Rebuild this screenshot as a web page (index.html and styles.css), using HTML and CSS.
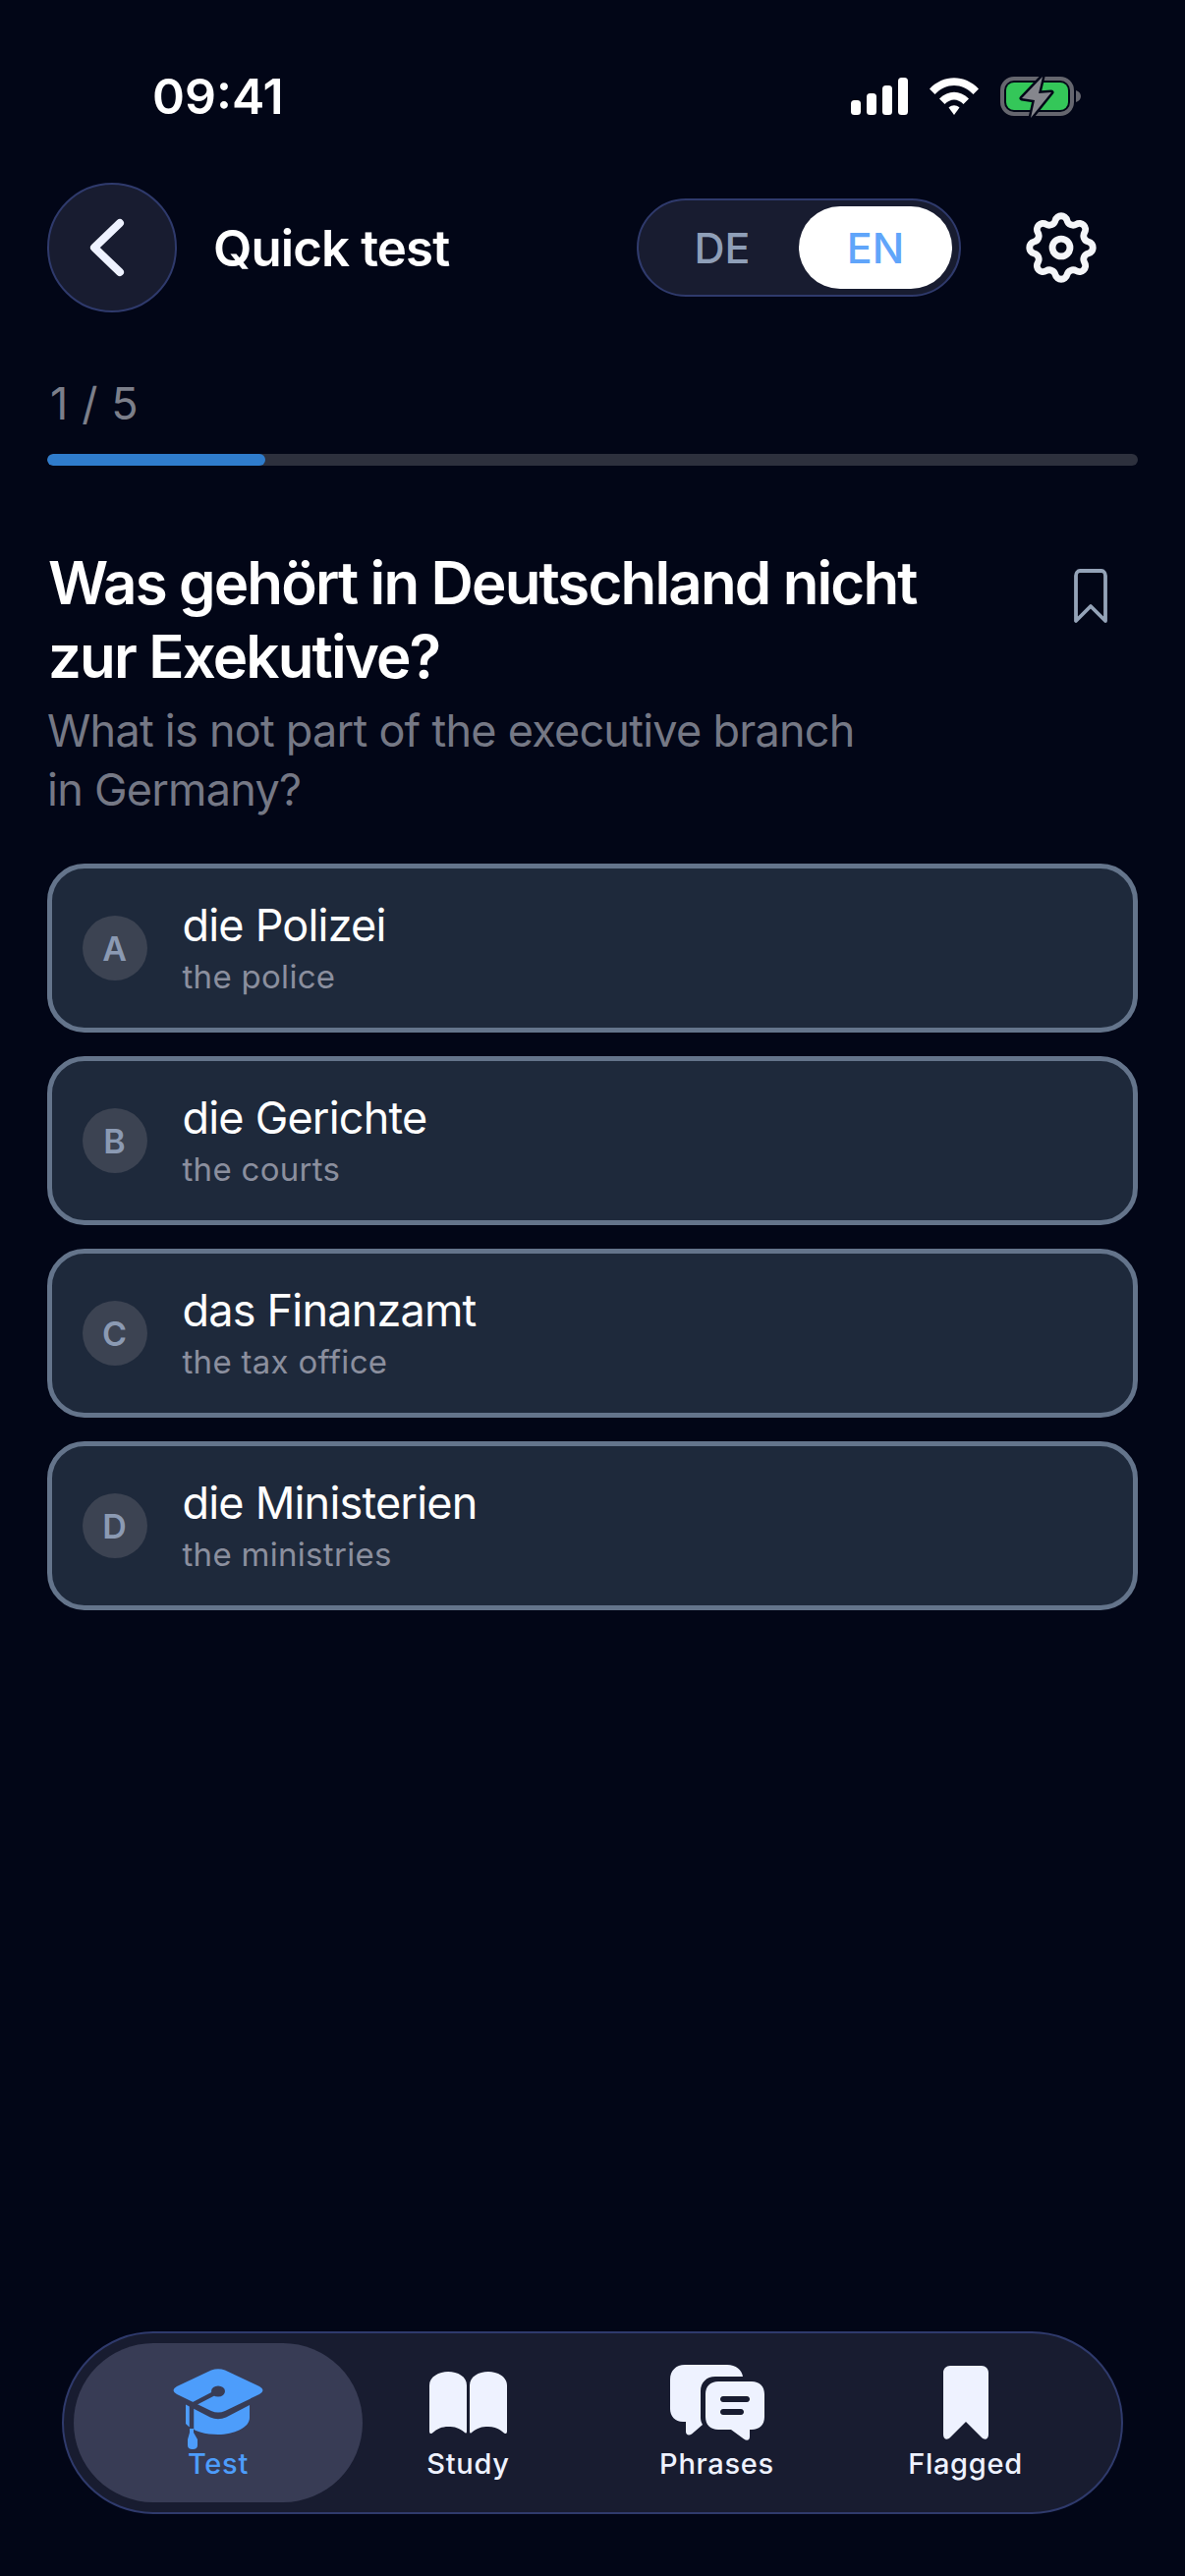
FILE: index.html
```html
<!DOCTYPE html>
<html lang="de">
<head>
<meta charset="utf-8">
<title>Quick test</title>
<link rel="stylesheet" href="styles.css">
</head>
<body>
<div class="screen">
  <div class="status">
    <span class="time">09:41</span>
    <div class="status-icons">
      <svg class="sig" width="58" height="38" viewBox="0 0 58 38"><rect x="0" y="23" width="10" height="15" rx="3.500"/><rect x="16" y="16" width="10" height="22" rx="3.500"/><rect x="32" y="8" width="10" height="30" rx="3.500"/><rect x="48" y="0" width="10" height="38" rx="3.500"/></svg>
      <svg class="wifi" width="50" height="38" viewBox="0 0 50 38"><path d="M0 11.500C14-3.500 36-3.500 50 11.500L44.500 17C33 5 17 5 5.500 17Z"/><path d="M10 21.500C19 12.500 31 12.500 40 21.500L34.500 27C28.500 21 21.500 21 15.500 27Z"/><path d="M19.500 30.500C23 27.500 27 27.500 30.500 30.500L25 38Z"/></svg>
      <svg class="batt" width="82" height="43" viewBox="0 0 82 43"><rect x="2" y="3" width="71" height="36" rx="12" fill="none" stroke="#65666e" stroke-width="4"/><rect x="6" y="7" width="63" height="28" rx="8" fill="#34c759"/><path d="M77 15C80 16 82 18 82 21C82 24 80 26 77 27Z" fill="#65666e"/><path d="M43 1L22 23L35 25L31 43L52 17L39 18Z" fill="#85868d" stroke="#020617" stroke-width="5" paint-order="stroke" stroke-linejoin="round"/></svg>
    </div>
  </div>

  <header class="topbar">
    <button class="back"><svg class="chev" width="44" height="64" viewBox="0 0 44 64"><path d="M34 7L8 32L34 57" fill="none" stroke="#eef2ff" stroke-width="8" stroke-linecap="round" stroke-linejoin="round"/></svg></button>
    <h1 class="title">Quick test</h1>
    <div class="lang">
      <span class="lang-opt">DE</span>
      <span class="lang-opt active">EN</span>
    </div>
    <svg class="gear" width="86" height="86" viewBox="0 0 24 24" fill="none" stroke="#f4f5f8" stroke-width="1.900" stroke-linecap="round" stroke-linejoin="round"><path d="M10.325 4.317c.426-1.756 2.924-1.756 3.35 0a1.724 1.724 0 0 0 2.573 1.066c1.543-.94 3.31.826 2.37 2.37a1.724 1.724 0 0 0 1.065 2.572c1.756.426 1.756 2.924 0 3.35a1.724 1.724 0 0 0-1.066 2.573c.94 1.543-.826 3.31-2.37 2.37a1.724 1.724 0 0 0-2.572 1.065c-.426 1.756-2.924 1.756-3.35 0a1.724 1.724 0 0 0-2.573-1.066c-1.543.94-3.31-.826-2.37-2.37a1.724 1.724 0 0 0-1.065-2.572c-1.756-.426-1.756-2.924 0-3.35a1.724 1.724 0 0 0 1.066-2.573c-.94-1.543.826-3.31 2.37-2.37.996.608 2.296.07 2.572-1.065z"/><circle cx="12" cy="12" r="2.500"/></svg>
  </header>

  <div class="progress">
    <div class="progress-label">1 / 5</div>
    <div class="track"><div class="fill"></div></div>
  </div>

  <section class="question">
    <div class="q-text">
      <h2 class="q-de">Was gehört in Deutschland nicht<br>zur Exekutive?</h2>
      <p class="q-en">What is not part of the executive branch<br>in Germany?</p>
    </div>
    <svg class="flag" width="38" height="56" viewBox="0 0 38 56"><path d="M4 7C4 4 6 2 8 2H30C32 2 34 4 34 7V53L19 38L4 53Z" fill="none" stroke="#94a3b8" stroke-width="3.800" stroke-linejoin="round"/></svg>
  </section>

  <div class="answers">
    <div class="answer"><span class="badge">A</span><div><div class="a-de">die Polizei</div><div class="a-en">the police</div></div></div>
    <div class="answer"><span class="badge">B</span><div><div class="a-de">die Gerichte</div><div class="a-en">the courts</div></div></div>
    <div class="answer"><span class="badge">C</span><div><div class="a-de">das Finanzamt</div><div class="a-en">the tax office</div></div></div>
    <div class="answer"><span class="badge">D</span><div><div class="a-de">die Ministerien</div><div class="a-en">the ministries</div></div></div>
  </div>

  <nav class="tabbar">
    <div class="tab active">
      <div class="tab-icon">
        <svg class="cap" width="92" height="82" viewBox="0 0 92 82">
          <path d="M39 1.500Q46-1 53 1.500L88 18Q95 22 88 26L53 43Q46 46 39 43L4 26Q-3 22 4 18Z" fill="#4d9dfb"/>
          <path d="M13 36.500L38 49.500Q46 53 54 49.500L78 37V50C78 60 62 67 46 67C34 67 20 64 13 56Z" fill="#4d9dfb"/>
          <path d="M46 23L19 37V63" fill="none" stroke="#383c55" stroke-width="4.500"/>
          <ellipse cx="46" cy="23" rx="7" ry="5.500" fill="#383c55"/>
          <path d="M17 61H21V65L25 72V78Q25 82 20 82Q15 82 15 78V72L17 65Z" fill="#4d9dfb"/>
        </svg>
      </div>
      <span>Test</span>
    </div>
    <div class="tab">
      <div class="tab-icon">
        <svg width="79" height="64" viewBox="0 0 79 64"><path d="M0 14C0 5 10 0 19 0C29 0 38 5 38 14V61Q38 63.500 36 62C30 57 26 56 19 56C13 56 8 58 3 62.500Q0 64 0 61Z" fill="#eef2ff"/><path d="M79 14C79 5 69 0 60 0C50 0 41 5 41 14V61Q41 63.500 43 62C49 57 53 56 60 56C66 56 71 58 76 62.500Q79 64 79 61Z" fill="#eef2ff"/></svg>
      </div>
      <span>Study</span>
    </div>
    <div class="tab">
      <div class="tab-icon">
        <svg width="96" height="77" viewBox="0 0 96 77"><path d="M15 0H58C67 0 73 5 74 12H46C37 12 31 18 31 27V54C31 57 32 59 33 61L22 70.500C19 72.500 16 71.500 16 68V58H13C5 58 0 52 0 45V15C0 6 6 0 15 0Z" fill="#eef2ff"/><path fill-rule="evenodd" d="M49 17H83C91 17 96 22 96 30V53C96 61 91 66 83 66H81V73C81 77 78 78 75 75.500L62 66H49C41 66 36 61 36 53V30C36 22 41 17 49 17ZM54 32C52 32 51 33.500 51 35C51 36.500 52 38 54 38H78C80 38 81 36.500 81 35C81 33.500 80 32 78 32ZM54 45C52 45 51 46.500 51 48C51 49.500 52 51 54 51H72C74 51 75 49.500 75 48C75 46.500 74 45 72 45Z" fill="#eef2ff"/></svg>
      </div>
      <span>Phrases</span>
    </div>
    <div class="tab">
      <div class="tab-icon">
        <svg width="46" height="75" viewBox="0 0 46 75"><path d="M7 0H39C43 0 46 3 46 7V70C46 75 42 76 39 73L23 57L7 73C4 76 0 75 0 70V7C0 3 3 0 7 0Z" fill="#eef2ff"/></svg>
      </div>
      <span>Flagged</span>
    </div>
  </nav>
</div>
</body>
</html>
```
FILE: styles.css
```css
* { box-sizing: border-box; margin: 0; padding: 0; }
html, body { background: #020617; }
body { font-family: Inter, "Liberation Sans", sans-serif; color: #fff; }
.screen { width: 1206px; height: 2622px; display: flex; flex-direction: column; overflow: hidden; }

.status { height: 186px; padding: 72px 106px 0 155px; display: flex; justify-content: space-between; align-items: flex-start; }
.time { font-size: 50px; font-weight: 600; line-height: 52px; }
.status-icons { display: flex; align-items: center; gap: 22px; height: 52px; }
.sig, .wifi { fill: #fff; }

.topbar { display: flex; align-items: center; height: 132px; padding: 0 48px; }
.back { width: 132px; height: 132px; border-radius: 50%; background: #181c30; border: 2px solid #2f3a6c; display: flex; align-items: center; justify-content: center; flex: none; }
.chev { margin-right: 8px; }
.title { font-size: 51px; font-weight: 600; margin-left: 37px; flex: 1; line-height: 1; letter-spacing: -.9px; }
.lang { width: 330px; height: 100px; border-radius: 50px; background: #181c30; border: 2px solid #2f3a6c; display: flex; align-items: center; padding: 0 7px; flex: none; }
.lang-opt { flex: 1; height: 84px; display: flex; align-items: center; justify-content: center; font-size: 43px; font-weight: 500; color: #8f9fb8; border-radius: 42px; }
.lang-opt.active { background: #fff; color: #60a5fa; flex: none; width: 156px; }
.gear { margin-left: 59px; margin-right: 35px; flex: none; }

.progress { padding: 70px 48px 0; }
.progress-label { font-size: 45px; line-height: 46px; color: #7c7f8a; padding-left: 3px; letter-spacing: .6px; }
.track { margin-top: 28px; height: 12px; border-radius: 6px; background: #2d303d; overflow: hidden; }
.fill { width: 20%; height: 100%; background: #2f7ccc; border-radius: 6px; }

.question { display: flex; justify-content: space-between; padding: 82px 48px 0 49px; }
.q-de { font-size: 60px; font-weight: 600; line-height: 75px; letter-spacing: -1.85px; }
.q-en { font-size: 45px; font-weight: 400; line-height: 60px; color: #757885; margin-top: 8px; margin-left: -1px; letter-spacing: -.75px; }
.flag { margin: 23px 29px 0 0; flex: none; }

.answers { display: flex; flex-direction: column; gap: 24px; padding: 45px 48px 0; }
.answer { height: 172px; border: 5.500px solid #64748b; border-radius: 38px; background: #1e293b; display: flex; align-items: center; padding-left: 30.500px; gap: 36px; }
.badge { width: 66px; height: 66px; border-radius: 50%; background: #3c4352; color: #8b9ab3; display: flex; align-items: center; justify-content: center; font-size: 34px; font-weight: 600; flex: none; }
.a-de { font-size: 45px; line-height: 54px; font-weight: 400; color: #fff; letter-spacing: -.8px; }
.a-en { font-size: 33px; line-height: 44px; color: #8b8f9e; margin-top: 3px; letter-spacing: .3px; }

.tabbar { margin: auto 63px 63px; height: 186px; border-radius: 93px; background: #181c30; border: 2px solid #2f3a6c; display: flex; align-items: center; padding: 0 10px; flex: none; }
.tab { flex: none; width: 253px; height: 162px; display: flex; flex-direction: column; align-items: center; padding-top: 16px; font-size: 29px; font-weight: 500; color: #eef2ff; }
.tab span { line-height: 36px; letter-spacing: .7px; }
.tab-icon { height: 89px; display: flex; align-items: center; justify-content: center; }
.tab.active { width: 294px; margin-right: -19px; border-radius: 81px; background: #383c55; color: #4d9dfb; }
.cap { margin-top: 13px; }
```
